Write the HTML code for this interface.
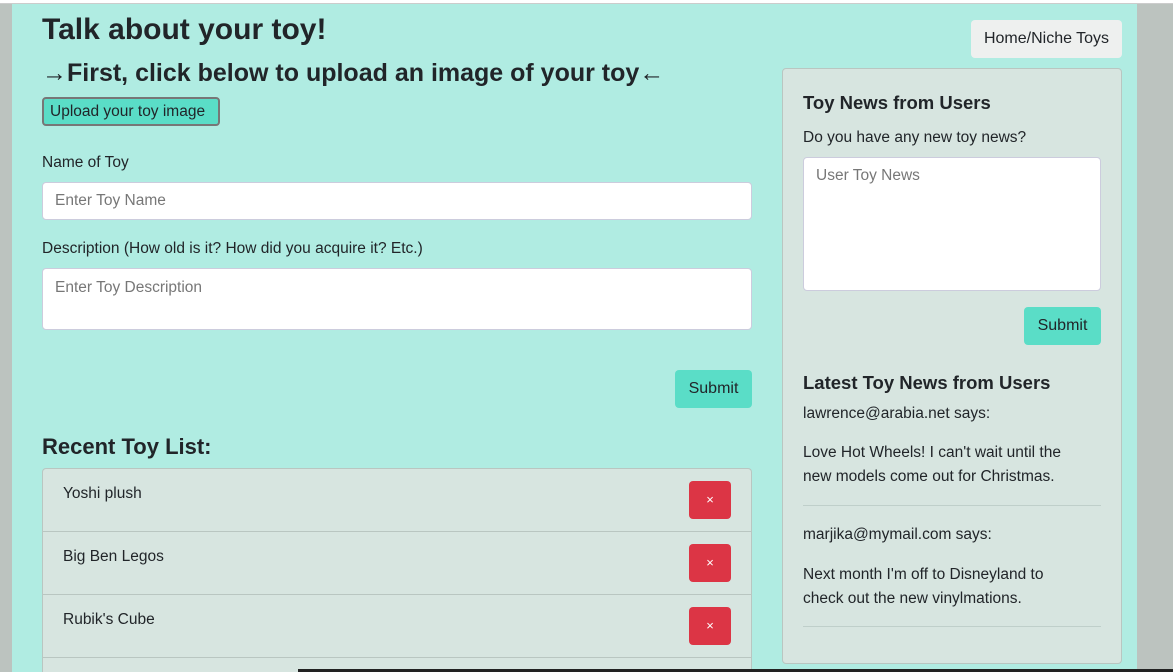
<!DOCTYPE html>
<html><head><style>
*{box-sizing:border-box;margin:0;padding:0}
html,body{width:1173px;height:672px;overflow:hidden}
body{background:#bcc3bf;font-family:"Liberation Sans",sans-serif;color:#212529;position:relative}
#w{position:absolute;left:0;top:0;width:1173px;height:672px;overflow:hidden}
.top{position:absolute;left:0;top:0;width:1173px;height:4px;background:#fff;border-bottom:1px solid #ccc}
.main{position:absolute;left:12px;top:4px;width:1125px;height:668px;background:#b0ece2}
.a{position:absolute}
h1{font-size:30px;font-weight:bold;position:absolute;left:42px;top:13px}
h2{font-size:25px;font-weight:bold;position:absolute;left:42px;top:59px;white-space:nowrap}
.up{left:42px;top:97px;width:178px;height:29px;background:#5addc7;border:2px solid #777;border-radius:4px;font-size:15.5px;padding:3px 6px;white-space:nowrap;line-height:20px}
label{position:absolute;font-size:15.5px}
.in{position:absolute;background:#fff;border:1px solid #ccd;border-radius:4px;color:#777;font-size:15.5px;padding:10px 12px}
.btn{position:absolute;background:#5addc7;border-radius:4px;font-size:16px;text-align:center}
.list{position:absolute;left:42px;top:468px;width:710px;height:204px;background:#d7e5e0;border:1px solid #b9c6c1;border-bottom:0;border-radius:4px 4px 0 0;overflow:hidden}
.row{position:absolute;left:0;width:708px;height:63px;border-bottom:1px solid #b9c6c1;font-size:15.5px;padding:16px 20px}
.x{position:absolute;right:20px;top:12px;width:42px;height:38px;background:#dc3545;border-radius:4px;color:#fff;text-align:center;line-height:38px;font-size:13px}
.card{position:absolute;left:782px;top:68px;width:340px;height:596px;background:#d7e5e0;border:1px solid #b9c6c1;border-radius:4px}
.t{position:absolute;font-size:15.5px;line-height:24px}
.h{position:absolute;font-size:18.5px;font-weight:bold}
hr{position:absolute;border:0;border-top:1px solid #bfcfca;width:298px;left:803px}
</style></head><body><div id="w">
<div class="top"></div>
<div class="main"></div>
<h1>Talk about your toy!</h1>
<h2>→First, click below to upload an image of your toy←</h2>
<div class="a up">Upload your toy image</div>
<label style="left:42px;top:154px">Name of Toy</label>
<div class="in" style="left:42px;top:182px;width:710px;height:38px;padding-top:9px">Enter Toy Name</div>
<label style="left:42px;top:240px">Description (How old is it? How did you acquire it? Etc.)</label>
<div class="in" style="left:42px;top:268px;width:710px;height:62px">Enter Toy Description</div>
<div class="btn" style="left:675px;top:370px;width:77px;height:38px;line-height:38px">Submit</div>
<div class="a" style="left:42px;top:434px;font-size:22px;font-weight:bold">Recent Toy List:</div>
<div class="list">
<div class="row" style="top:0">Yoshi plush<div class="x">×</div></div>
<div class="row" style="top:63px">Big Ben Legos<div class="x">×</div></div>
<div class="row" style="top:126px">Rubik's Cube<div class="x">×</div></div>
<div class="row" style="top:189px;border:0"><div class="x" style="background:#b02a37">×</div></div>
</div>
<div class="btn" style="left:971px;top:20px;width:151px;height:38px;line-height:38px;background:#eef0ef">Home/Niche Toys</div>
<div class="card"></div>
<div class="h" style="left:803px;top:92px">Toy News from Users</div>
<div class="t" style="left:803px;top:126px">Do you have any new toy news?</div>
<div class="in" style="left:803px;top:157px;width:298px;height:134px;padding-top:9px">User Toy News</div>
<div class="btn" style="left:1024px;top:307px;width:77px;height:38px;line-height:38px">Submit</div>
<div class="h" style="left:803px;top:372px">Latest Toy News from Users</div>
<div class="t" style="left:803px;top:402px">lawrence@arabia.net says:</div>
<div class="t" style="left:803px;top:441px">Love Hot Wheels! I can't wait until the<br>new models come out for Christmas.</div>
<hr style="top:505px">
<div class="t" style="left:803px;top:523px">marjika@mymail.com says:</div>
<div class="t" style="left:803px;top:563px">Next month I'm off to Disneyland to<br>check out the new vinylmations.</div>
<hr style="top:626px">
<div class="a" style="left:298px;top:669px;width:875px;height:3px;background:#222"></div>
</div></body></html>
